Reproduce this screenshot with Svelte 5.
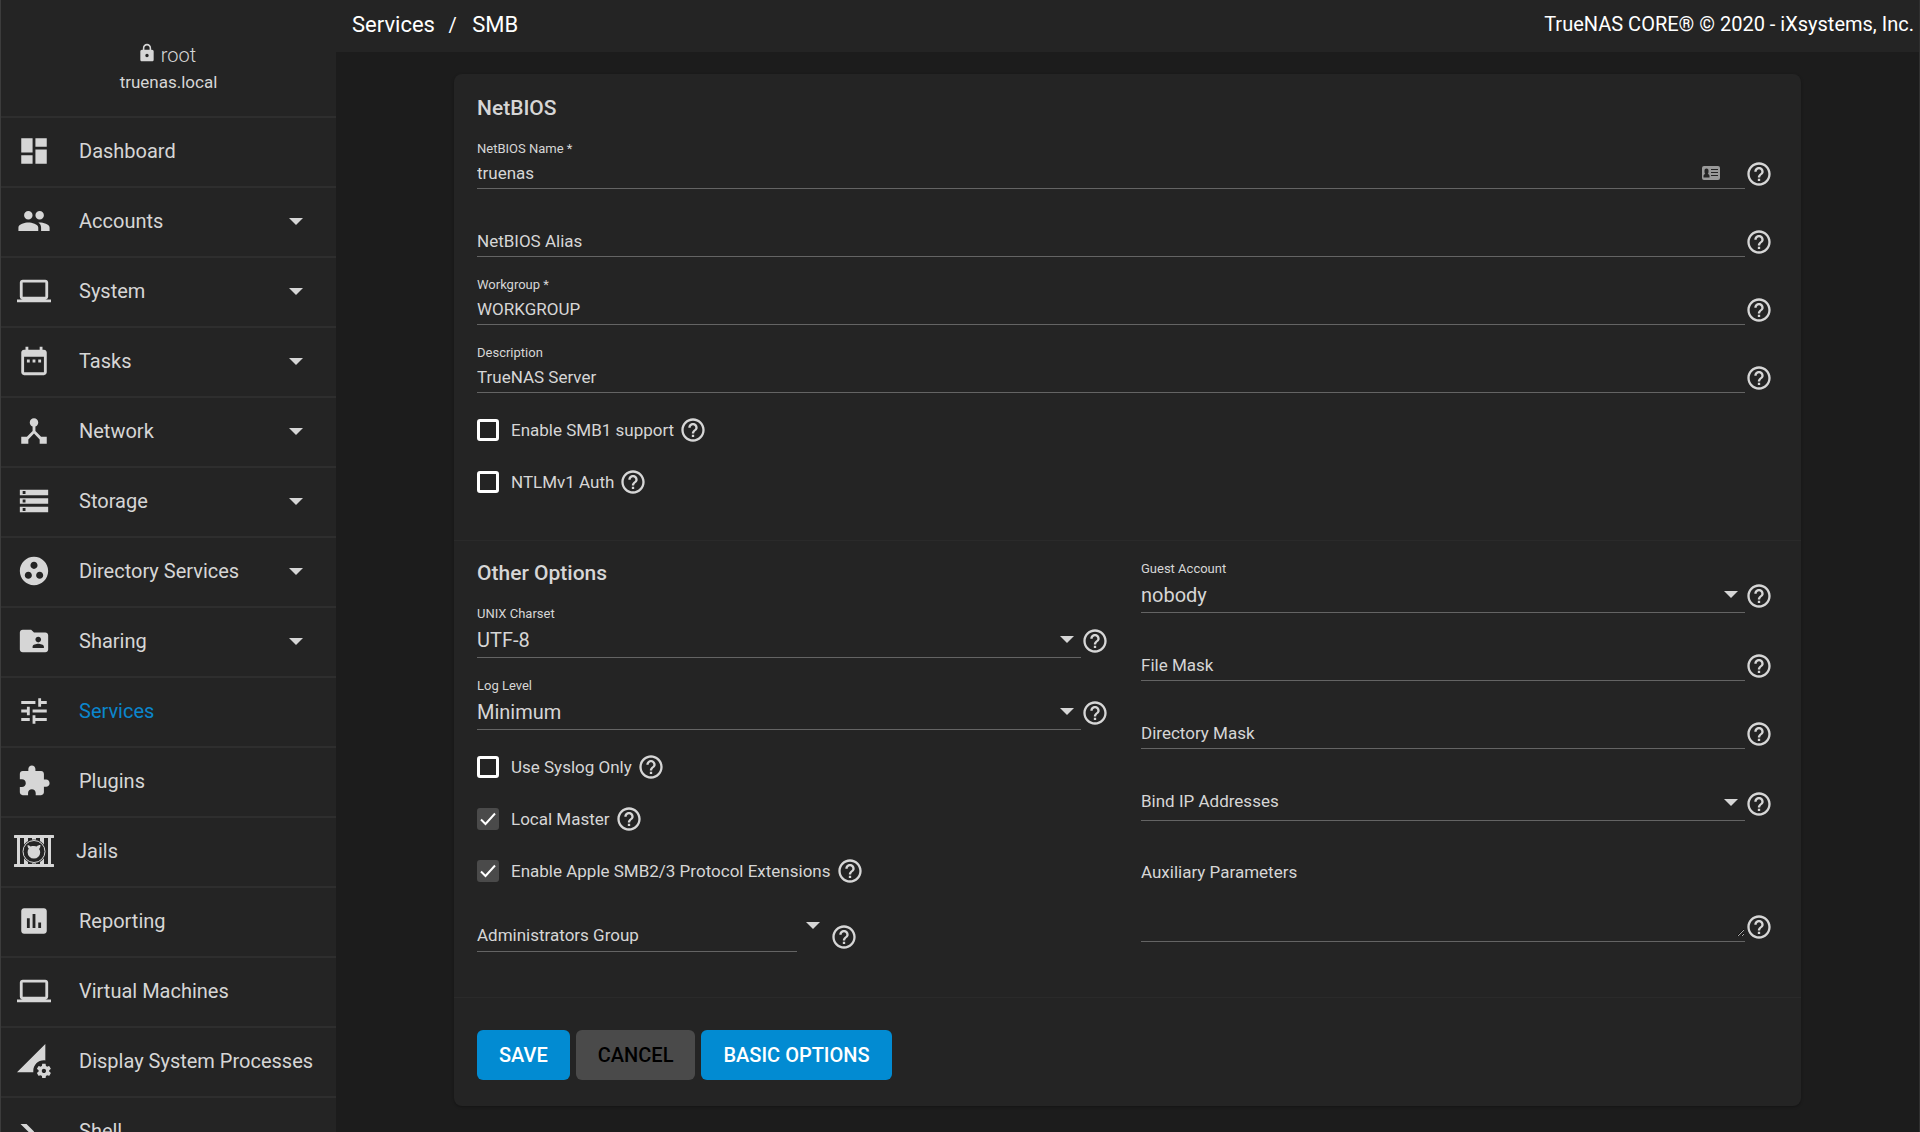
<script>
	let hostname = 'truenas.local';
	let user = 'root';

	let menu = [
		{ name: 'Dashboard', icon: 'dashboard' },
		{ name: 'Accounts', icon: 'people', sub: true },
		{ name: 'System', icon: 'laptop', sub: true },
		{ name: 'Tasks', icon: 'date_range', sub: true },
		{ name: 'Network', icon: 'device_hub', sub: true },
		{ name: 'Storage', icon: 'storage', sub: true },
		{ name: 'Directory Services', icon: 'group_work', sub: true },
		{ name: 'Sharing', icon: 'folder_shared', sub: true },
		{ name: 'Services', icon: 'tune' },
		{ name: 'Plugins', icon: 'extension' },
		{ name: 'Jails', icon: 'jail' },
		{ name: 'Reporting', icon: 'assessment' },
		{ name: 'Virtual Machines', icon: 'laptop' },
		{ name: 'Display System Processes', icon: 'perm_data_setting' },
		{ name: 'Shell', icon: 'console' }
	];

	let active = 'Services';

	// 24x24 icon paths
	const icons = {
		dashboard: 'M3 13h8V3H3v10zm0 8h8v-6H3v6zm10 0h8V11h-8v10zm0-18v6h8V3h-8z',
		people:
			'M16 11c1.66 0 2.99-1.34 2.99-3S17.66 5 16 5c-1.66 0-3 1.34-3 3s1.34 3 3 3zm-8 0c1.66 0 2.99-1.34 2.99-3S9.66 5 8 5C6.34 5 5 6.34 5 8s1.34 3 3 3zm0 2c-2.33 0-7 1.17-7 3.5V19h14v-2.5c0-2.33-4.67-3.5-7-3.5zm8 0c-.29 0-.62.02-.97.05 1.16.84 1.97 1.97 1.97 3.45V19h6v-2.5c0-2.33-4.67-3.5-7-3.5z',
		laptop:
			'M20 18c1.1 0 1.99-.9 1.99-2L22 6c0-1.1-.9-2-2-2H4c-1.1 0-2 .9-2 2v10c0 1.1.9 2 2 2H0v2h24v-2h-4zM4 6h16v10H4V6z',
		date_range:
			'M9 11H7v2h2v-2zm4 0h-2v2h2v-2zm4 0h-2v2h2v-2zm2-7h-1V2h-2v2H8V2H6v2H5c-1.11 0-1.99.9-1.99 2L3 20c0 1.1.89 2 2 2h14c1.1 0 2-.9 2-2V6c0-1.1-.9-2-2-2zm0 16H5V9h14v11z',
		device_hub:
			'M17 16l-4-4V8.82C14.16 8.4 15 7.3 15 6c0-1.66-1.34-3-3-3S9 4.34 9 6c0 1.3.84 2.4 2 2.82V12l-4 4H3v5h5v-3.05l4-4.2 4 4.2V21h5v-5h-4z',
		storage:
			'M2 20h20v-4H2v4zm2-3h2v2H4v-2zM2 4v4h20V4H2zm4 3H4V5h2v2zm-4 7h20v-4H2v4zm2-3h2v2H4v-2z',
		group_work:
			'M12 2C6.48 2 2 6.48 2 12s4.48 10 10 10 10-4.48 10-10S17.52 2 12 2zM8 17.5c-1.38 0-2.5-1.12-2.5-2.5s1.12-2.5 2.5-2.5 2.5 1.12 2.5 2.5-1.12 2.5-2.5 2.5zM9.5 8c0-1.38 1.12-2.5 2.5-2.5s2.5 1.12 2.5 2.5-1.12 2.5-2.5 2.5S9.5 9.38 9.5 8zm6.5 9.5c-1.38 0-2.5-1.12-2.5-2.5s1.12-2.5 2.5-2.5 2.5 1.12 2.5 2.5-1.12 2.5-2.5 2.5z',
		folder_shared:
			'M20 6h-8l-2-2H4c-1.1 0-1.99.9-1.99 2L2 18c0 1.1.9 2 2 2h16c1.1 0 2-.9 2-2V8c0-1.1-.9-2-2-2zm-5 3c1.1 0 2 .9 2 2s-.9 2-2 2-2-.9-2-2 .9-2 2-2zm4 8h-8v-1c0-1.33 2.67-2 4-2s4 .67 4 2v1z',
		tune: 'M3 17v2h6v-2H3zM3 5v2h10V5H3zm10 16v-2h8v-2h-8v-2h-2v6h2zM7 9v2H3v2h4v2h2V9H7zm14 4v-2H11v2h10zm-6-4h2V7h4V5h-4V3h-2v6z',
		extension:
			'M20.5 11H19V7c0-1.1-.9-2-2-2h-4V3.5C13 2.12 11.88 1 10.5 1S8 2.12 8 3.5V5H4c-1.1 0-1.99.9-1.99 2v3.8H3.5c1.49 0 2.7 1.21 2.7 2.7s-1.21 2.7-2.7 2.7H2V20c0 1.1.9 2 2 2h3.8v-1.5c0-1.49 1.21-2.7 2.7-2.7 1.49 0 2.7 1.21 2.7 2.7V22H17c1.1 0 2-.9 2-2v-4h1.5c1.38 0 2.5-1.12 2.5-2.5S21.88 11 20.5 11z',
		assessment:
			'M19 3H5c-1.1 0-2 .9-2 2v14c0 1.1.9 2 2 2h14c1.1 0 2-.9 2-2V5c0-1.1-.9-2-2-2zM9 17H7v-7h2v7zm4 0h-2V7h2v10zm4 0h-2v-4h2v4z',
		perm_data_setting:
			'M18.99 11.5c.34 0 .67.03 1 .07L20 0 0 20h11.56c-.04-.33-.07-.66-.07-1 0-4.14 3.36-7.5 7.5-7.5zm3.71 7.99c.02-.16.04-.32.04-.49 0-.17-.01-.33-.04-.49l1.06-.83c.09-.08.12-.21.06-.32l-1-1.73c-.06-.11-.19-.15-.31-.11l-1.24.5c-.26-.2-.54-.37-.85-.49l-.19-1.32c-.01-.12-.12-.21-.24-.21h-2c-.12 0-.23.09-.25.21l-.19 1.32c-.3.13-.59.29-.85.49l-1.24-.5c-.11-.04-.24 0-.31.11l-1 1.73c-.06.11-.04.24.06.32l1.06.83c-.02.16-.03.32-.03.49 0 .17.01.33.03.49l-1.06.83c-.09.08-.12.21-.06.32l1 1.73c.06.11.19.15.31.11l1.24-.5c.26.2.54.37.85.49l.19 1.32c.02.12.12.21.25.21h2c.12 0 .23-.09.25-.21l.19-1.32c.3-.13.59-.29.84-.49l1.25.5c.11.04.24 0 .31-.11l1-1.73c.06-.11.03-.24-.06-.32l-1.07-.83zm-3.71 1.01c-.83 0-1.5-.67-1.5-1.5s.67-1.5 1.5-1.5 1.5.67 1.5 1.5-.67 1.5-1.5 1.5z',
		console:
			'M13 19v-3h8v3h-8M8.5 13L2.47 7h4.24l4.96 4.95c.58.59.58 1.55 0 2.12L6.74 19H2.5l6-6z',
		lock: 'M18 8h-1V6c0-2.76-2.24-5-5-5S7 3.24 7 6v2H6c-1.1 0-2 .9-2 2v10c0 1.1.9 2 2 2h12c1.1 0 2-.9 2-2V10c0-1.1-.9-2-2-2zm-6 9c-1.1 0-2-.9-2-2s.9-2 2-2 2 .9 2 2-.9 2-2 2zm3.1-9H8.9V6c0-1.71 1.39-3.1 3.1-3.1 1.71 0 3.1 1.39 3.1 3.1v2z',
		help: 'M11 18h2v-2h-2v2zm1-16C6.48 2 2 6.48 2 12s4.48 10 10 10 10-4.48 10-10S17.52 2 12 2zm0 18c-4.41 0-8-3.59-8-8s3.59-8 8-8 8 3.59 8 8-3.59 8-8 8zm0-14c-2.21 0-4 1.79-4 4h2c0-1.1.9-2 2-2s2 .9 2 2c0 2-3 1.75-3 5h2c0-2.25 3-2.5 3-5 0-2.21-1.79-4-4-4z'
	};

	let smb = {
		netbiosname: 'truenas',
		netbiosalias: '',
		workgroup: 'WORKGROUP',
		description: 'TrueNAS Server',
		smb1: false,
		ntlmv1: false,
		charset: 'UTF-8',
		loglevel: 'Minimum',
		syslog: false,
		localmaster: true,
		aapl: true,
		admin: '',
		guest: 'nobody',
		filemask: '',
		dirmask: '',
		bindip: '',
		aux: ''
	};

	let netbios = [
		{ key: 'netbiosname', label: 'NetBIOS Name *', card: true },
		{ key: 'netbiosalias', label: 'NetBIOS Alias' },
		{ key: 'workgroup', label: 'Workgroup *' },
		{ key: 'description', label: 'Description' }
	];

	let netbiosChecks = [
		{ key: 'smb1', label: 'Enable SMB1 support' },
		{ key: 'ntlmv1', label: 'NTLMv1 Auth' }
	];

	let selects = [
		{ key: 'charset', label: 'UNIX Charset', options: ['UTF-8', 'UTF-16', 'ASCII'] },
		{ key: 'loglevel', label: 'Log Level', options: ['None', 'Minimum', 'Normal', 'Full', 'Debug'] }
	];

	let otherChecks = [
		{ key: 'syslog', label: 'Use Syslog Only' },
		{ key: 'localmaster', label: 'Local Master' },
		{ key: 'aapl', label: 'Enable Apple SMB2/3 Protocol Extensions' }
	];

	let guest = { key: 'guest', label: 'Guest Account', options: ['nobody', 'root'] };
	let bindip = { key: 'bindip', label: 'Bind IP Addresses', options: ['', '0.0.0.0'] };

	let masks = [
		{ key: 'filemask', label: 'File Mask' },
		{ key: 'dirmask', label: 'Directory Mask' }
	];
</script>

{#snippet help(label)}
	<button type="button" class="help" aria-label="Help for {label}">
		<svg viewBox="0 0 24 24"><path d={icons.help} /></svg>
	</button>
{/snippet}

{#snippet caret()}
	<svg class="caret" viewBox="0 0 14 7" aria-hidden="true"><path d="M0 0h14L7 7z" /></svg>
{/snippet}

{#snippet textField(f)}
	<div class="field">
		<div class="control" class:empty={smb[f.key] === ''}>
			<label for={f.key}>{f.label}</label>
			<input id={f.key} type="text" bind:value={smb[f.key]} />
			{#if f.card}
				<svg class="id-card" viewBox="0 0 18 14" aria-hidden="true">
					<path
						fill-rule="evenodd"
						d="M2 0h14a2 2 0 0 1 2 2v10a2 2 0 0 1-2 2H2a2 2 0 0 1-2-2V2a2 2 0 0 1 2-2zM9 3v1h7V3zM9 6v1h7V6zM9 9v1h7V9zM1.5 11.5h6V10c0-1.2-.8-1.8-1.8-2 .5-.4.8-1.2.8-2V4.5c0-1.2-.8-2-2-2s-2 .8-2 2V6c0 .8.3 1.6.8 2-1 .2-1.8.8-1.8 2z"
					/>
				</svg>
			{/if}
		</div>
		{@render help(f.label)}
	</div>
{/snippet}

{#snippet selectField(f)}
	<div class="field select">
		<div class="control" class:empty={smb[f.key] === ''}>
			<label for={f.key}>{f.label}</label>
			<select id={f.key} bind:value={smb[f.key]}>
				{#each f.options as option}
					<option value={option}>{option}</option>
				{/each}
			</select>
			{@render caret()}
		</div>
		{@render help(f.label)}
	</div>
{/snippet}

{#snippet checkField(f)}
	<div class="check">
		<label>
			<input type="checkbox" bind:checked={smb[f.key]} />
			<span>{f.label}</span>
		</label>
		{@render help(f.label)}
	</div>
{/snippet}

<div class="layout">
	<aside>
		<div class="user">
			<div class="name">
				<svg viewBox="0 0 24 24" aria-hidden="true"><path d={icons.lock} /></svg>
				<span>{user}</span>
			</div>
			<div class="host">{hostname}</div>
		</div>

		<nav>
			{#each menu as item}
				<a href="#{item.icon}" class:active={item.name === active}>
					{#if item.icon === 'jail'}
						<svg class="jail" viewBox="0 0 40 34" aria-hidden="true">
							<path
								d="M1 1h38a1 1 0 0 1 0 3H1a1 1 0 0 1 0-3zM1 30h38a1 1 0 0 1 0 3H1a1 1 0 0 1 0-3zM3 4h3v26H3zM10 4h4v26h-4zM18 4h4v26h-4zM26 4h4v26h-4zM34 4h3v26h-3z"
							/>
							<circle class="hole" cx="20" cy="17.5" r="12" />
							<circle class="ring" cx="20" cy="17.5" r="11" />
							<path
								d="M20 12c1 0 2 .2 2.800.5.7-1 1.900-1.500 3.700-1.500 0 1.700-.5 3-1.500 3.900.8 1 1.200 2.100 1.200 3.300a6.300 6.300 0 0 1-12.600 0c0-1.500.4-2.700 1.200-3.700-.9-.8-1.300-1.900-1.300-3.300 1.300 0 2.300.4 3 1.300 1.100-.4 2.200-.5 3.500-.5z"
							/>
						</svg>
					{:else}
						<svg class="icon" viewBox="0 0 24 24" aria-hidden="true">
							<path d={icons[item.icon]} />
						</svg>
					{/if}
					<span>{item.name}</span>
					{#if item.sub}
						{@render caret()}
					{/if}
				</a>
			{/each}
		</nav>
	</aside>

	<div class="page">
		<header>
			<div class="crumbs">
				<a href="#services">Services</a>
				<span class="slash">/</span>
				<span>SMB</span>
			</div>
			<div class="copyright">TrueNAS CORE® © 2020 - iXsystems, Inc.</div>
		</header>

		<main>
			<form on:submit|preventDefault>
				<section class="netbios">
					<h2>NetBIOS</h2>
					{#each netbios as f}
						{@render textField(f)}
					{/each}
					<div class="checks">
						{#each netbiosChecks as f}
							{@render checkField(f)}
						{/each}
					</div>
				</section>

				<section class="other">
					<div class="col">
						<h2>Other Options</h2>
						{#each selects as f}
							{@render selectField(f)}
						{/each}
						<div class="checks">
							{#each otherChecks as f}
								{@render checkField(f)}
							{/each}
						</div>
						<div class="field combo">
							<div class="control" class:empty={smb.admin === ''}>
								<label for="admin">Administrators Group</label>
								<input id="admin" type="text" bind:value={smb.admin} />
							</div>
							{@render caret()}
							{@render help('Administrators Group')}
						</div>
					</div>

					<div class="col">
						{@render selectField(guest)}
						{#each masks as f}
							{@render textField(f)}
						{/each}
						{@render selectField(bindip)}
						<div class="field area">
							<div class="control" class:empty={smb.aux === ''}>
								<label for="aux">Auxiliary Parameters</label>
								<textarea id="aux" bind:value={smb.aux}></textarea>
							</div>
							{@render help('Auxiliary Parameters')}
						</div>
					</div>
				</section>

				<div class="actions">
					<button type="submit" class="primary">SAVE</button>
					<button type="button">CANCEL</button>
					<button type="button" class="primary">BASIC OPTIONS</button>
				</div>
			</form>
		</main>
	</div>
</div>

<style>
	:global(body) {
		background: #1c1c1c;
		color: #d6d6d6;
		font-family: Roboto, 'Liberation Sans', sans-serif;
		font-size: 17px;
		color-scheme: dark;
	}

	.layout,
	.layout * {
		box-sizing: border-box;
	}

	.layout {
		display: flex;
		height: 100vh;
		overflow: hidden;
		border-right: 1px solid #303030;
	}

	svg {
		display: block;
		fill: currentColor;
		flex: none;
	}

	a {
		color: inherit;
		text-decoration: none;
	}

	button,
	input,
	select,
	textarea {
		font: inherit;
		color: inherit;
		margin: 0;
		padding: 0;
		border: none;
		background: none;
		outline: none;
	}

	.caret {
		width: 14px;
		height: 7px;
		pointer-events: none;
	}

	/* Sidebar */
	aside {
		flex: none;
		width: 336px;
		overflow: hidden;
		background: #242424;
		border-left: 1px solid #3c3c3c;
	}

	.user {
		height: 116px;
		padding-top: 42px;
		display: flex;
		flex-direction: column;
		align-items: center;
	}

	.name {
		display: flex;
		align-items: center;
		gap: 4px;
		margin-right: 4px;
		font-size: 20px;
		font-weight: 300;
		line-height: 26px;
	}

	.name svg {
		width: 20px;
		height: 20px;
		margin-bottom: 4px;
	}

	.host {
		line-height: 28px;
	}

	nav a {
		display: flex;
		align-items: center;
		gap: 28px;
		height: 70px;
		padding: 0 33px 2px 16px;
		border-top: 2px solid #2e2e2e;
		font-size: 20px;
		white-space: nowrap;
	}

	nav a span {
		flex: 1;
	}

	nav .active span {
		color: #0b86cd;
	}

	.icon {
		width: 34px;
		height: 34px;
	}

	.jail {
		width: 40px;
		height: 34px;
		margin: 0 -6px 0 -3px;
	}

	.hole {
		fill: #242424;
	}

	.ring {
		fill: none;
		stroke: currentColor;
		stroke-width: 1;
	}

	/* Top bar */
	.page {
		flex: 1;
		min-width: 0;
	}

	header {
		display: flex;
		justify-content: space-between;
		align-items: center;
		height: 52px;
		padding: 0 5px 4px 16px;
		background: #242424;
		color: #fff;
		font-size: 20px;
	}

	.crumbs {
		font-size: 22px;
	}

	.slash {
		margin: 0 10px 0 8px;
		font-size: 20px;
	}

	/* Form card */
	form {
		margin: 22px 118px;
		background: #242424;
		border-radius: 8px;
		box-shadow: 0 1px 3px rgba(0, 0, 0, 0.3);
	}

	h2 {
		margin: 0 0 1px;
		font-size: 21px;
		font-weight: 500;
		line-height: 24px;
	}

	section {
		padding: 22px 28px 0 23px;
		border-bottom: 1px solid #2a2a2a;
	}

	.netbios {
		padding-bottom: 32px;
	}

	.other {
		display: grid;
		grid-template-columns: 1fr 1fr;
		gap: 32px;
		padding-top: 0;
		padding-bottom: 45px;
	}

	.other h2 {
		margin-top: 20px;
	}

	.field {
		display: flex;
		align-items: flex-end;
	}

	.control {
		flex: 1;
		display: grid;
		grid-template-rows: 16px 31px;
		padding-top: 20px;
		border-bottom: 1px solid #646464;
	}

	.control label {
		grid-area: 1 / 1;
		font-size: 13px;
		line-height: 16px;
	}

	/* empty fields show their label in place of the value */
	.control.empty label {
		grid-area: 2 / 1;
		font-size: 17px;
		line-height: 32px;
	}

	.control input,
	.control select,
	.control textarea {
		grid-area: 2 / 1;
		width: 100%;
	}

	.id-card {
		grid-area: 2 / 1;
		place-self: center end;
		width: 18px;
		height: 14px;
		margin-right: 25px;
		color: #9a9a9a;
	}

	.select .control {
		grid-template-rows: 16px 35px;
	}

	.select select {
		appearance: none;
		font-size: 20px;
	}

	.select .caret {
		grid-area: 2 / 1;
		place-self: center end;
		margin-right: 7px;
	}

	.help {
		flex: none;
		width: 28px;
		height: 28px;
		margin-bottom: 1px;
		cursor: pointer;
	}

	.help svg {
		width: 28px;
		height: 28px;
	}

	.select .help {
		margin-bottom: 3px;
	}

	.combo .control {
		flex: none;
		width: 320px;
		grid-template-rows: 0 32px;
		padding-top: 22px;
	}

	.combo .caret {
		margin: 0 10px 23px 9px;
	}

	.area .control {
		grid-template-rows: 0 85px;
		padding-top: 35px;
	}

	.area textarea {
		height: 81px;
		resize: vertical;
	}

	.checks {
		padding-top: 11px;
	}

	.check {
		display: flex;
		align-items: center;
		gap: 5px;
		height: 52px;
	}

	.check label {
		display: flex;
		align-items: center;
		gap: 12px;
	}

	.check input {
		appearance: none;
		width: 22px;
		height: 22px;
		border: 3px solid #fff;
		border-radius: 3px;
	}

	.check input:checked {
		border-color: #4a4a4a;
		background: #4a4a4a
			url("data:image/svg+xml,%3Csvg xmlns='http://www.w3.org/2000/svg' viewBox='0 0 18 18'%3E%3Cpath d='M2 9.500l4.500 4.500L16 3.500' fill='none' stroke='%23fff' stroke-width='2'/%3E%3C/svg%3E")
			center / 18px no-repeat border-box;
	}

	.check .help {
		margin: 0;
	}

	.actions {
		display: flex;
		gap: 6px;
		padding: 32px 23px 26px;
	}

	.actions button {
		height: 50px;
		padding: 0 22px;
		border-radius: 6px;
		background: #4a4a4a;
		color: #000;
		font-size: 20px;
		font-weight: 500;
		cursor: pointer;
	}

	.actions .primary {
		background: #028bd2;
		color: #fff;
	}
</style>
